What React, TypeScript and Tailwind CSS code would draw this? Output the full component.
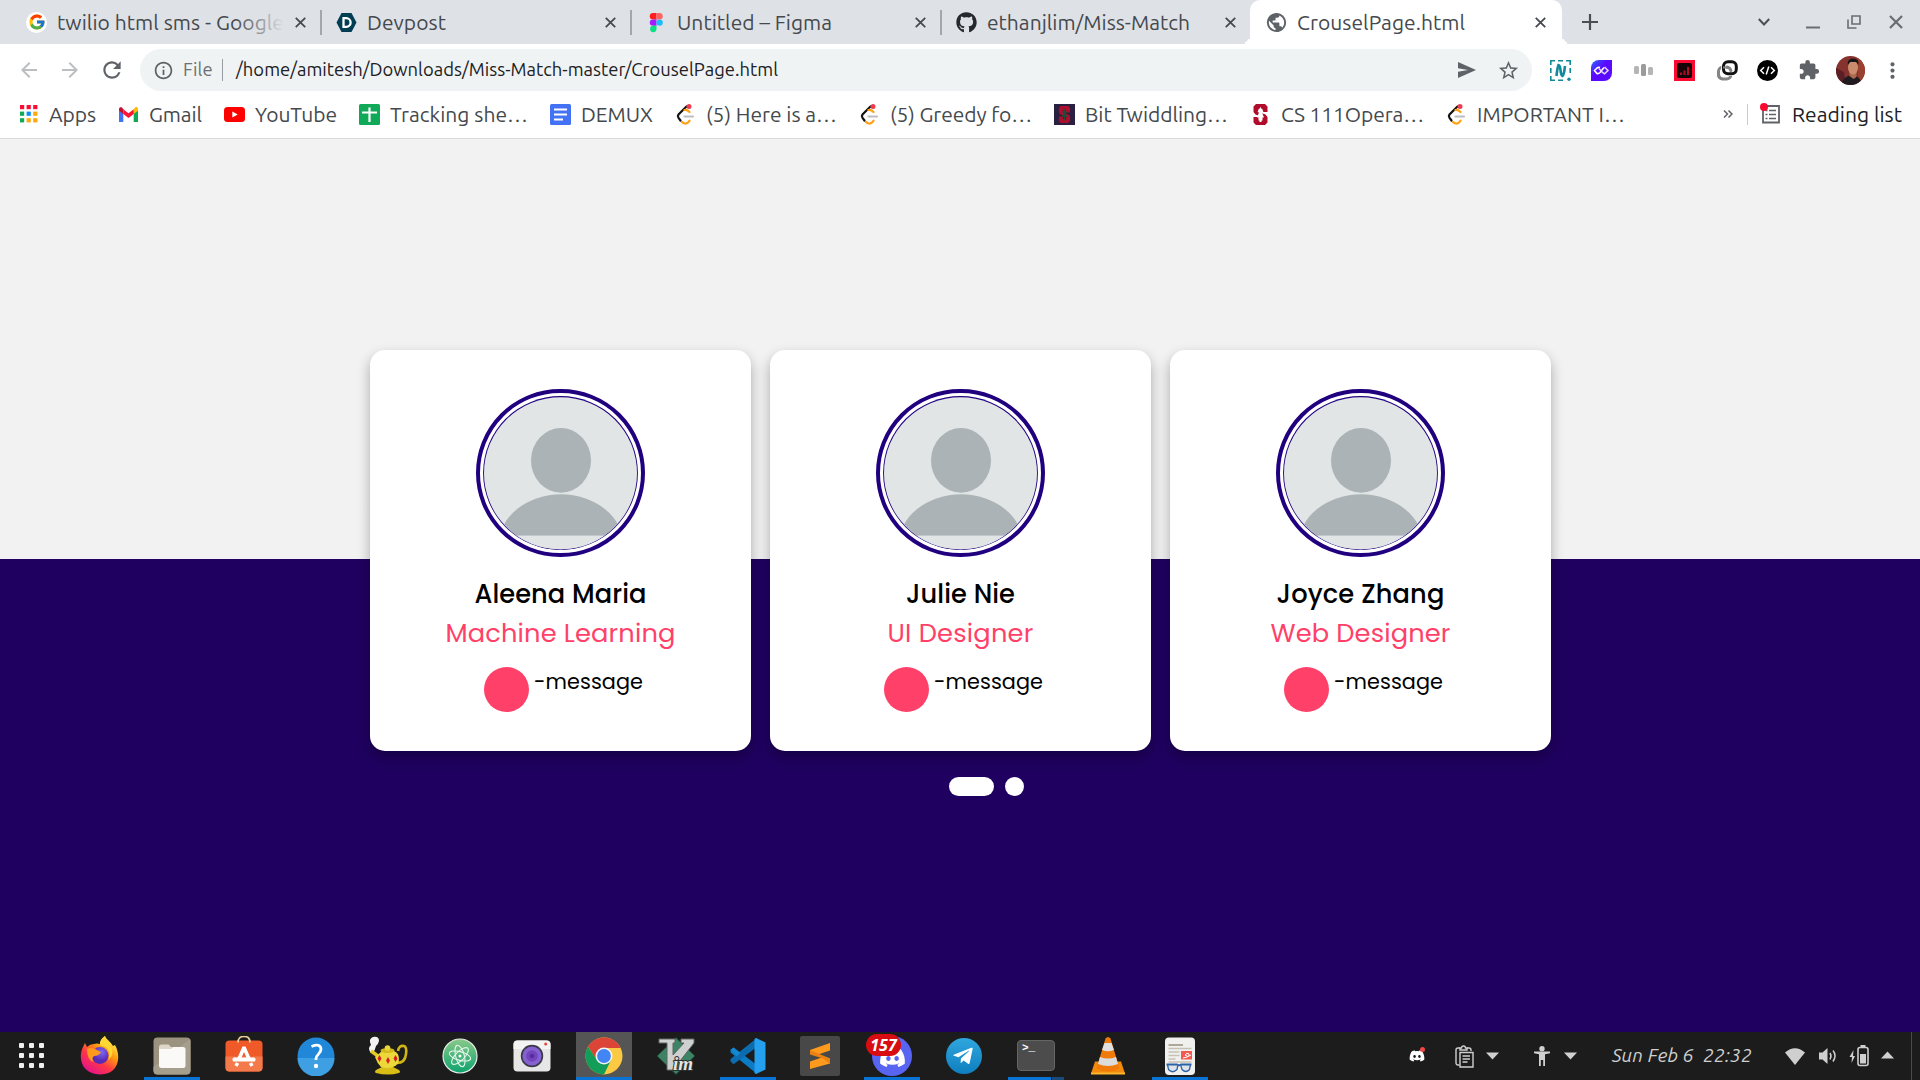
import { useLayoutEffect, useRef, useState } from 'react'
import type { ReactNode } from 'react'
import { FcGoogle } from 'react-icons/fc'
import { FaDiscord, FaGithub, FaTelegramPlane } from 'react-icons/fa'
import {
  MdArrowBack,
  MdArrowForward,
  MdExtension,
  MdInfoOutline,
  MdMoreVert,
  MdPublic,
  MdRefresh,
  MdStarBorder,
} from 'react-icons/md'

interface FitTextProps {
  text: string
  width: number
  className?: string
}

// Spreads the letters so that a label takes exactly the given width
function FitText({ text, width, className = '' }: FitTextProps) {
  const ref = useRef<HTMLSpanElement>(null)
  const [spacing, setSpacing] = useState(0)

  useLayoutEffect(() => {
    if (!ref.current) return
    const natural = ref.current.getBoundingClientRect().width
    setSpacing((width - natural) / text.length)
  }, [text, width])

  return (
    <span ref={ref} className={`inline-block shrink-0 whitespace-pre ${className}`} style={{ letterSpacing: spacing }}>
      {text}
    </span>
  )
}

/* ---------- small icons ---------- */

function CloseIcon({ size = 11 }: { size?: number }) {
  return (
    <svg width={size} height={size} viewBox="0 0 10 10" stroke="currentColor" strokeWidth="1.6">
      <path d="M.7.7l8.6 8.6M9.3.7L.7 9.3" />
    </svg>
  )
}

function GoogleIcon() {
  return (
    <span className="flex size-[21px] items-center justify-center rounded-full bg-white">
      <FcGoogle size={18} />
    </span>
  )
}

function DevpostIcon() {
  return (
    <svg width="21" height="21" viewBox="0 0 21 21">
      <path d="M5.5 1h10l5 9.5-5 9.5h-10l-5-9.5z" fill="#003e54" />
      <path d="M7.5 6.2h2.8a4.3 4.3 0 010 8.6H7.5z" fill="none" stroke="#fff" strokeWidth="2.3" />
    </svg>
  )
}

function FigmaIcon() {
  return (
    <svg width="21" height="21" viewBox="0 0 21 21">
      <path d="M10.5 1H7a3.2 3.2 0 000 6.4h3.5z" fill="#ff1f1f" />
      <path d="M10.5 1h3a3.2 3.2 0 010 6.4h-3z" fill="#ff6262" />
      <path d="M10.5 7.4H7a3.2 3.2 0 000 6.4h3.5z" fill="#a51aff" />
      <circle cx="13.6" cy="10.6" r="3.2" fill="#1abcfe" />
      <path d="M10.5 13.8H7a3.2 3.2 0 103.500 3.2z" fill="#0adf83" />
    </svg>
  )
}

function AppsIcon() {
  const colors = ['#fb0d33', '#fb0d33', '#fb0d33', '#0fa958', '#0b8cff', '#ffa90b', '#0fa958', '#ffa90b', '#ffa90b']
  return (
    <svg width="21" height="21" viewBox="0 0 21 21">
      {colors.map((c, i) => (
        <rect key={i} x={2 + (i % 3) * 6.6} y={1 + Math.floor(i / 3) * 6.6} width="4.2" height="4.2" fill={c} />
      ))}
    </svg>
  )
}

function GmailIcon() {
  return (
    <svg width="21" height="21" viewBox="0 0 21 21">
      <path d="M1 6v12h4.300V9z" fill="#4272f5" />
      <path d="M20 6v12h-4.300V9z" fill="#0fa958" />
      <path d="M15.700 5.500V10L20 6.800V5c0-2-2-2.400-3-1.500z" fill="#ffbc04" />
      <path d="M5.300 10V5.300l5.200 3.900 5.200-3.900V10l-5.200 4z" fill="#fb1638" />
      <path d="M1 6.800L5.300 10V5.300L4 3.500C3 2.700 1 3.200 1 5z" fill="#c5122f" />
    </svg>
  )
}

function YouTubeIcon() {
  return (
    <svg width="21" height="21" viewBox="0 0 21 21">
      <rect x="0" y="3" width="21" height="15" rx="3.5" fill="#f00" />
      <path d="M8.3 7.5v6l5.400-3z" fill="#fff" />
    </svg>
  )
}

function SheetsIcon() {
  return (
    <svg width="21" height="21" viewBox="0 0 21 21">
      <rect width="21" height="21" rx="1.5" fill="#0fa958" />
      <path d="M10.500 3.500v14.500M3 8.500h15" stroke="#fff" strokeWidth="2.2" />
    </svg>
  )
}

function DocsIcon() {
  return (
    <svg width="21" height="21" viewBox="0 0 21 21">
      <rect width="21" height="21" rx="1.5" fill="#4372f5" />
      <path d="M4 5.500h13M4 10.500h13M4 15.500h9" stroke="#fff" strokeWidth="2" />
    </svg>
  )
}

function LeetCodeIcon() {
  return (
    <svg width="21" height="21" viewBox="0 0 21 21" fill="none" strokeWidth="2.2" strokeLinecap="round">
      <path d="M11.500 2.500L3.500 10.500q-1.300 1.700 0 3.300L5.500 16.500" stroke="#111" />
      <path d="M7 18l1.500 1q2.500 1.500 4.500-.5l1.500-1.800M9.500 6q2.500-.5 5 2" stroke="#ffa116" />
      <path d="M9.500 12.500h8.500" stroke="#bdbdbd" />
      <circle cx="14" cy="2.600" r="2.500" fill="#ef3c50" />
    </svg>
  )
}

function StanfordMark() {
  return (
    <>
      <path d="M6 0h9l2.500 2.500V8h-5V5h-4v3l7 2.500 2 2.500v5.500L15 21H6l-2.500-2.500V13h5v3.500h4V13l-7-2.500-2-2.500V2.500z" fill="#b00c2b" />
      <path d="M10.500 3l3 5-1.500.5 2 5h-2.500V18h-2v-4.500H7l2-5-1.500-.5z" fill="currentColor" />
    </>
  )
}

function BitIcon() {
  return (
    <svg width="21" height="21" viewBox="0 0 21 21">
      <rect width="21" height="21" fill="#292042" />
      <g transform="translate(2.100 2.100) scale(.8)" className="text-[#254a38]">
        <StanfordMark />
      </g>
    </svg>
  )
}

function StanfordIcon() {
  return (
    <svg width="21" height="21" viewBox="0 0 21 21" className="text-white">
      <StanfordMark />
    </svg>
  )
}

/* ---------- browser ---------- */

interface TabItem {
  title: string
  width: number
  icon: ReactNode
  faded?: boolean
}

const tabs: TabItem[] = [
  { title: 'twilio html sms - Google', width: 227, icon: <GoogleIcon />, faded: true },
  { title: 'Devpost', width: 79, icon: <DevpostIcon /> },
  { title: 'Untitled – Figma', width: 155, icon: <FigmaIcon /> },
  { title: 'ethanjlim/Miss-Match', width: 203, icon: <FaGithub size={21} color="#24292f" /> },
]

function TabStrip() {
  return (
    <div className="flex h-[44px] bg-[#dee1e6] pl-[11px] text-[21px] text-[#45494d]">
      {tabs.map((tab, i) => (
        <div key={tab.title} className="relative flex w-[310px] items-center pl-[15px] pr-[15px]">
          <span className="flex size-[21px] items-center justify-center">{tab.icon}</span>
          <div className="relative ml-[10px] w-[227px] overflow-hidden pt-px">
            <FitText text={tab.title} width={tab.width} />
            {tab.faded && (
              <span className="absolute inset-y-0 right-0 w-[50px] bg-linear-to-r from-[#dee1e6]/0 to-[#dee1e6]" />
            )}
          </div>
          <span className="ml-auto">
            <CloseIcon />
          </span>
          {i < tabs.length - 1 && <span className="absolute -right-px top-[10px] h-[25px] w-[2px] bg-[#a3a6aa]" />}
        </div>
      ))}
      <div className="relative -ml-px flex w-[312px] items-center rounded-t-[10px] bg-white pl-[15px] pr-[16px]">
        <span className="absolute -left-[10px] bottom-0 size-[10px] rounded-br-[10px] shadow-[5px_5px_0_0_white]" />
        <span className="absolute -right-[10px] bottom-0 size-[10px] rounded-bl-[10px] shadow-[-5px_5px_0_0_white]" />
        <MdPublic size={23} color="#5f6368" />
        <FitText text="CrouselPage.html" width={168} className="ml-[9px] pt-px" />
        <span className="ml-auto">
          <CloseIcon />
        </span>
      </div>
      <div className="flex flex-1 items-center pl-[20px] pr-[17px] text-[#4b4f53]">
        <svg width="16" height="16" viewBox="0 0 16 16" stroke="currentColor" strokeWidth="2.2">
          <path d="M8 0v16M0 8h16" />
        </svg>
        <svg className="ml-[160px]" width="12" height="8" viewBox="0 0 12 8" fill="none" stroke="currentColor" strokeWidth="2">
          <path d="M.8 1L6 6.500 11.200 1" />
        </svg>
        <svg className="ml-[36px]" width="14" height="14" viewBox="0 0 14 14" stroke="#6a6d71" strokeWidth="2">
          <path d="M0 12.500h14" />
        </svg>
        <svg className="ml-[27px]" width="14" height="14" viewBox="0 0 14 14" fill="none" stroke="#6a6d71" strokeWidth="1.6">
          <path d="M5 1h8v8H5zM1 4.500V13h8.500" />
        </svg>
        <span className="ml-auto text-[#6a6d71]">
          <CloseIcon size={14} />
        </span>
      </div>
    </div>
  )
}

function Toolbar() {
  return (
    <div className="flex h-[52px] items-center bg-white pl-[17px]">
      <MdArrowBack size={24} color="#bcbec0" />
      <MdArrowForward size={24} color="#bcbec0" className="ml-[17px]" />
      <MdRefresh size={26} color="#5f6368" className="ml-[17px]" />
      <div className="ml-[15px] flex h-[42px] w-[1392px] items-center rounded-full bg-[#f0f3f4] pl-[13px] pr-[12px] text-[18.4px]">
        <MdInfoOutline size={21} color="#5f6368" />
        <FitText text="File" width={30} className="ml-[9px] text-[#6c7075]" />
        <span className="ml-[9px] h-[22px] w-px bg-[#9a9da1]" />
        <FitText
          text="/home/amitesh/Downloads/Miss-Match-master/CrouselPage.html"
          width={542}
          className="ml-[13px] text-[#202124]"
        />
        <svg className="ml-auto" width="18" height="16" viewBox="0 0 18 16" fill="#5f6368">
          <path d="M0 0l18 8L0 16V9.800L10 8 0 6.200z" />
        </svg>
        <MdStarBorder size={23} color="#5f6368" className="ml-[21px]" />
      </div>
      <svg className="ml-[18px]" width="21" height="21" viewBox="0 0 21 21" fill="none" stroke="#118a9b">
        <path d="M.8 5V.8H5M8 .8h5M16 .8h4.200V5M20.200 8v5M.8 8v5M.8 16v4.200H5M8 20.200h5" strokeWidth="1.6" />
        <path d="M6.500 16C7 11 7.500 7.500 8.500 5q1.500 0 2 5 .5 5 2 6 1.500-1 2.500-10" strokeWidth="2.6" />
        <circle cx="19" cy="19.300" r="1.7" fill="#118a9b" stroke="none" />
      </svg>
      <svg className="ml-[20px]" width="21" height="21" viewBox="0 0 21 21" fill="none">
        <defs>
          <linearGradient id="ext" x1="0" y1="0" x2="0.7" y2="0.7">
            <stop offset="0" stopColor="#2a6bff" />
            <stop offset="0.6" stopColor="#5a0bff" />
          </linearGradient>
        </defs>
        <path d="M8 0h13v13a8 8 0 01-8 8H0V8a8 8 0 018-8z" fill="url(#ext)" />
        <path d="M9 7.500q-1.500-.5-3 .5L3.500 10.500l2.500 3q1.500.5 3-1l4-5" stroke="#fff" strokeWidth="1.6" />
        <path d="M8 8.500l3.500 4 2 1.300 3.500-3.300L13.500 7" stroke="#e2d5ff" strokeWidth="1.5" />
      </svg>
      <svg className="ml-[22px]" width="19" height="12" viewBox="0 0 19 12">
        <rect y="2" width="5" height="8" rx="1.5" fill="#b5b5b5" />
        <rect x="7" width="5" height="12" rx="1.5" fill="#9b9b9b" />
        <rect x="14" y="3" width="5" height="8" rx="1.5" fill="#b5b5b5" />
      </svg>
      <svg className="ml-[21px]" width="21" height="21" viewBox="0 0 21 21">
        <rect width="21" height="21" fill="#f90b32" />
        <rect x="3" y="3" width="15" height="15" rx="2" fill="#150508" />
        <path d="M7 12.500V15M10.500 10.500V15M14 7v8" stroke="#b00d27" strokeWidth="2" />
      </svg>
      <svg className="ml-[22px]" width="21" height="21" viewBox="0 0 21 21" fill="none" strokeWidth="3">
        <rect x="1.500" y="7" width="12.500" height="12" rx="4.500" stroke="#858585" />
        <rect x="6.500" y="1.800" width="12.800" height="12" rx="4.500" stroke="#fff" strokeWidth="4.500" />
        <path d="M1.500 11.500v3a4.500 4.500 0 004 4.500" stroke="#858585" />
        <rect x="6.500" y="1.800" width="12.800" height="12" rx="4.500" stroke="#111" />
        <path d="M6 7.500H9q4.500 0 5 4.500" stroke="#858585" strokeWidth="2" />
      </svg>
      <svg className="ml-[19px]" width="21" height="21" viewBox="0 0 21 21" fill="none">
        <circle cx="10.500" cy="10.500" r="10.500" fill="#000" />
        <path d="M7 7.200l-3.300 3.300L7 13.800M14 7.200l3.300 3.300-3.300 3.300M11.800 6.500l-2.600 8" stroke="#fff" strokeWidth="1.5" />
      </svg>
      <MdExtension size={22} color="#5f6368" className="ml-[20px]" />
      <svg className="ml-[16px]" width="29" height="29" viewBox="0 0 29 29">
        <defs>
          <clipPath id="avatar">
            <circle cx="14.500" cy="14.500" r="14.500" />
          </clipPath>
        </defs>
        <g clipPath="url(#avatar)">
          <rect width="29" height="29" fill="#86322f" />
          <path d="M0 12l8 4 2 13H0z" fill="#5b2025" />
          <path d="M22 0h7v29h-7z" fill="#9b3f30" />
          <path d="M5 29q2-9 11-10 9 1 10 10z" fill="#201b1f" />
          <path d="M13.500 15h7v6l-3 2-4-3z" fill="#a96c51" />
          <ellipse cx="17" cy="11.500" rx="5" ry="7" fill="#c98c6c" />
          <path d="M11.800 9q-1-6 5-6.500 7 0 5.500 6.500l-2-3h-6z" fill="#1a1517" />
        </g>
      </svg>
      <MdMoreVert size={25} color="#5f6368" className="ml-[15px]" />
    </div>
  )
}

interface Bookmark {
  label: string
  width: number
  icon: ReactNode
}

const bookmarks: Bookmark[] = [
  { label: 'Apps', width: 47, icon: <AppsIcon /> },
  { label: 'Gmail', width: 53, icon: <GmailIcon /> },
  { label: 'YouTube', width: 82, icon: <YouTubeIcon /> },
  { label: 'Tracking she…', width: 138, icon: <SheetsIcon /> },
  { label: 'DEMUX', width: 72, icon: <DocsIcon /> },
  { label: '(5) Here is a…', width: 131, icon: <LeetCodeIcon /> },
  { label: '(5) Greedy fo…', width: 142, icon: <LeetCodeIcon /> },
  { label: 'Bit Twiddling…', width: 143, icon: <BitIcon /> },
  { label: 'CS 111Opera…', width: 143, icon: <StanfordIcon /> },
  { label: 'IMPORTANT I…', width: 148, icon: <LeetCodeIcon /> },
]

function BookmarksBar() {
  return (
    <div className="flex h-[43px] items-center gap-[22px] border-b border-[#d8dadc] bg-white pb-[6px] pl-[18px] pr-[18px] text-[21px] text-[#45494d]">
      {bookmarks.map((b) => (
        <div key={b.label} className="flex items-center gap-[10px]">
          {b.icon}
          <FitText text={b.label} width={b.width} className="pt-[2px]" />
        </div>
      ))}
      <div className="ml-auto flex items-center">
        <svg width="10" height="8" viewBox="0 0 10 8" fill="none" stroke="#5f6368" strokeWidth="1.5">
          <path d="M1 .5L4.500 4 1 7.500M5.500.5L9 4 5.500 7.500" />
        </svg>
        <span className="ml-[14px] h-[21px] w-px bg-[#c9ccd0]" />
        <svg className="ml-[12px]" width="20" height="22" viewBox="0 0 20 22" fill="none">
          <path d="M3 3h16v16.500H3z" stroke="#5f6368" strokeWidth="1.8" />
          <path d="M5.500 7.500h2M5.500 11.500h2M5.500 15.500h2M9 7.500h7M9 11.500h7M9 15.500h7" stroke="#5f6368" strokeWidth="1.6" />
          <circle cx="4" cy="4" r="4" fill="#f9092e" />
        </svg>
        <FitText text="Reading list" width={110} className="ml-[12px] pt-[2px] text-[#202124]" />
      </div>
    </div>
  )
}

/* ---------- page ---------- */

interface Profile {
  name: string
  nameWidth: number
  role: string
  roleWidth: number
}

const profiles: Profile[] = [
  { name: 'Aleena Maria', nameWidth: 172, role: 'Machine Learning', roleWidth: 230 },
  { name: 'Julie Nie', nameWidth: 109, role: 'UI Designer', roleWidth: 146 },
  { name: 'Joyce Zhang', nameWidth: 168, role: 'Web Designer', roleWidth: 180 },
]

function ProfileCard({ profile }: { profile: Profile }) {
  return (
    <div className="flex h-[401px] w-[381px] flex-col items-center rounded-[15px] bg-white pt-[39px] font-[Poppins,Inter,sans-serif] text-black shadow-[0_6px_13px_rgba(0,0,0,0.3)]">
      <div className="h-[168px] w-[169px] rounded-full border-4 border-[#210080] p-[3px]">
        <svg width="155" height="154" viewBox="0 0 155 155" preserveAspectRatio="none">
          <defs>
            <clipPath id="photo">
              <circle cx="77.500" cy="77.700" r="76.500" />
            </clipPath>
          </defs>
          <circle cx="77.500" cy="77.500" r="77.400" fill="#210080" />
          <g clipPath="url(#photo)">
            <rect width="155" height="155" fill="#e1e5e6" />
            <ellipse cx="78" cy="64.800" rx="30" ry="32.500" fill="#abb3b6" />
            <ellipse cx="78" cy="149" rx="62" ry="50" fill="#abb3b6" />
            <rect y="140.500" width="155" height="16" fill="#e1e5e6" />
          </g>
        </svg>
      </div>
      <div className="mt-[18px] flex h-[39px] items-center pl-px text-[25.7px] font-medium">
        <FitText text={profile.name} width={profile.nameWidth} />
      </div>
      <div className="flex h-[39px] items-center pl-px text-[25.7px] text-[#ff4169]">
        <FitText text={profile.role} width={profile.roleWidth} />
      </div>
      <div className="mt-[14px] flex pl-[7px]">
        <span className="size-[45px] rounded-full bg-[#ff416a]" />
        <FitText text="-message" width={109} className="ml-[5px] text-[20.8px] leading-[30px]" />
      </div>
    </div>
  )
}

function CarouselPage() {
  return (
    <main className="flex h-[893px] flex-col items-center bg-linear-to-b from-[#f2f2f2] from-[420px] to-[#1f0060] to-[420px] pt-[211px]">
      <div className="flex gap-[19px]">
        {profiles.map((p) => (
          <ProfileCard key={p.name} profile={p} />
        ))}
      </div>
      <div className="mt-[26px] flex gap-[11px] pl-[53px]">
        <span className="h-[19px] w-[45px] rounded-[9.5px] bg-white" />
        <span className="size-[19px] rounded-[9.5px] bg-white" />
      </div>
    </main>
  )
}

/* ---------- dock ---------- */

function FirefoxIcon() {
  return (
    <svg width="40" height="40" viewBox="0 0 40 40">
      <defs>
        <linearGradient id="ff1" x1="0.85" y1="0.1" x2="0.25" y2="0.95">
          <stop offset="0" stopColor="#fff44f" />
          <stop offset="0.35" stopColor="#ff980e" />
          <stop offset="0.65" stopColor="#ff3647" />
          <stop offset="1" stopColor="#e31587" />
        </linearGradient>
        <radialGradient id="ff2" cx="0.6" cy="0.3">
          <stop offset="0" stopColor="#7d6af5" />
          <stop offset="1" stopColor="#5b2bb5" />
        </radialGradient>
      </defs>
      <path d="M25 0c1 3 5 5 8 10l2-1c6 10 5 29.500-15 29.500C2 38.500-2 23 2.500 12L5 7l2 4q3-3 7-3 3-1 6 0 0-5 5-8z" fill="url(#ff1)" />
      <circle cx="20" cy="19.500" r="8.500" fill="url(#ff2)" />
      <path d="M7 13q4-2 8 0l6 3q-2 4-7 4-3 2 0 6-7-1-7-13z" fill="#ff9a1d" />
      <path d="M25 0c-5 4-6 7-4 10 8 0 10 8 7 14 6-4 5-11 2-14 0-3-5-5-5-10z" fill="#ffd735" />
    </svg>
  )
}

function FilesIcon() {
  return (
    <svg width="40" height="40" viewBox="0 0 40 40">
      <rect x="1.500" y="1.500" width="37" height="37" rx="4" fill="#9b927f" />
      <path d="M1.500 31L38 3a4 4 0 01.5 2v29.500a4 4 0 01-4 4h-29a4 4 0 01-4-4z" fill="#a69e8d" />
      <path d="M7 17v-6a2.500 2.500 0 012.500-2.500h7L19 11h11v6z" fill="#ddd6c9" />
      <path d="M7 13h12l2.500-2H31a2.500 2.500 0 012.500 2.500v16A2.500 2.500 0 0131 32H9.500A2.500 2.500 0 017 29.500z" fill="#faf9f7" />
    </svg>
  )
}

function SoftwareIcon() {
  return (
    <svg width="40" height="40" viewBox="0 0 40 40" fill="none">
      <rect x="1.500" y="4.500" width="37" height="31" rx="4" fill="#f05a28" />
      <path d="M1.500 20.500h37v11a4 4 0 01-4 4h-29a4 4 0 01-4-4z" fill="#f47a4b" />
      <path d="M14 6.500Q14 .5 20 .5t6 6" stroke="#ecd0a0" strokeWidth="1.7" />
      <path d="M12.500 24L18.500 10.500h3L27.500 24h-4L20 16l-3.500 8z" fill="#fff" />
      <rect x="8.500" y="21.500" width="23" height="4" rx="1.5" fill="#fff" />
      <path d="M13.500 27l-1.500 3M26.500 27l1.500 3" stroke="#fff" strokeWidth="3.5" />
    </svg>
  )
}

function HelpIcon() {
  return (
    <svg width="40" height="40" viewBox="0 0 40 40" fill="none">
      <circle cx="20" cy="20" r="18.500" fill="#2187d8" />
      <path d="M1.500 22a18.500 18.500 0 0037 0z" fill="#3e9fe3" />
      <path d="M15.500 10.500q9-3.500 9.500 2.500c.3 4.500-5 5.500-5 9.500v1.500" stroke="#fff" strokeWidth="2.8" />
      <circle cx="20" cy="30" r="2.200" fill="#fff" />
    </svg>
  )
}

function TeapotIcon() {
  return (
    <svg width="42" height="40" viewBox="0 0 42 40" fill="none">
      <path d="M4 17q-4-5 0-8-3-6 2-8 6-1 6 4-1 4-3 5-1 4-3 7z" fill="#f4f4f4" />
      <path d="M31 15q1-6 6-5 3 1 2 8-1 9-9 9" stroke="#cfb515" strokeWidth="2.6" />
      <path d="M4 15q6 4 9 7" stroke="#e2cb22" strokeWidth="3.5" />
      <path d="M9 34q-2 2 0 3 12 3 23 0 2-1 0-3l-6-3H15z" fill="#d9bd17" />
      <path d="M8 21q4-3 7-6 6-2 12 0 5 2 5 8 0 6-6 8-6 2-12 0-4-4-6-10z" fill="#ecd83a" />
      <ellipse cx="20.500" cy="14.500" rx="7" ry="2.500" fill="#d5b91a" />
      <circle cx="20.500" cy="12" r="2.800" fill="#ead63c" />
      <path d="M12.500 19l2 3.500-2 3.500-2-3.500zM21 21l2 3.500-2 3.500-2-3.500zM28.500 19l2 3.500-2 3.500-2-3.500z" fill="#d32020" />
    </svg>
  )
}

function AtomIcon() {
  return (
    <svg width="40" height="40" viewBox="0 0 40 40" fill="none">
      <defs>
        <linearGradient id="atom" x1="0" y1="0" x2="0" y2="1">
          <stop offset="0" stopColor="#8ac989" />
          <stop offset="1" stopColor="#0da36d" />
        </linearGradient>
      </defs>
      <circle cx="20" cy="20" r="17" fill="url(#atom)" stroke="#e5ece8" strokeWidth="1.2" />
      <g stroke="#e6f5ed" strokeWidth="1.1">
        <ellipse cx="20" cy="20" rx="11" ry="4.300" transform="rotate(15 20 20)" />
        <ellipse cx="20" cy="20" rx="11" ry="4.300" transform="rotate(75 20 20)" />
        <ellipse cx="20" cy="20" rx="11" ry="4.300" transform="rotate(135 20 20)" />
      </g>
      <circle cx="20" cy="20" r="1.500" fill="#fff" />
    </svg>
  )
}

function CameraIcon() {
  return (
    <svg width="40" height="40" viewBox="0 0 40 40">
      <rect x="1.500" y="4.500" width="37" height="31" rx="4" fill="#e7e6e6" />
      <path d="M1.500 13h37V8.500a4 4 0 00-4-4h-29a4 4 0 00-4 4z" fill="#f4f3f3" />
      <circle cx="20" cy="20" r="11.200" fill="#39394a" />
      <circle cx="20" cy="20" r="9.600" fill="#8562d0" />
      <circle cx="20" cy="20" r="5.800" fill="#7345bd" />
      <circle cx="20" cy="20" r="2.200" fill="#542c9c" />
      <circle cx="33.700" cy="8" r="1.500" fill="#e0453a" />
    </svg>
  )
}

function ChromeIcon() {
  return (
    <svg width="40" height="40" viewBox="0 0 40 40">
      <circle cx="20" cy="20" r="18.500" fill="#fcca42" />
      <path d="M3.980 10.750A18.500 18.500 0 0136 10.750L36.300 12H20l-7 12.300z" fill="#dc4437" />
      <path d="M3.980 10.750A18.500 18.500 0 0020 38.500L27 24l-14 0z" fill="#129d58" />
      <circle cx="20" cy="20" r="8.500" fill="#f4f4f4" />
      <circle cx="20" cy="20" r="6.900" fill="#4285f4" />
    </svg>
  )
}

function VimIcon() {
  return (
    <svg width="40" height="40" viewBox="0 0 40 40">
      <path d="M20 1.500l19 18.500-19 18.500L1 20z" fill="#3c8466" stroke="#21392f" />
      <path d="M3 3h16v4h-2v12L28 7h-3V3h13v4L17 34h-6V7H3z" fill="#cfd1d1" stroke="#5e6462" />
      <text x="17" y="34" fill="#e4e5e5" stroke="#2b2f2d" strokeWidth="2" paintOrder="stroke" className="font-['Liberation_Serif',serif] text-[19px] font-bold italic">
        im
      </text>
    </svg>
  )
}

function VsCodeIcon() {
  return (
    <svg width="40" height="40" viewBox="0 0 40 40">
      <path d="M2.500 14l3-2.500L29 29v9L2.500 16.500z" fill="#0a7bc4" />
      <path d="M2.500 25.500l3 2.800L29 11V2L2.500 23z" fill="#0b6cb0" />
      <path d="M2.500 14l3-2.500 7 5.500-4 3.500z" fill="#1487d0" />
      <path d="M28 2l9.500 4.500v27L28 38l-1.500-1V3z" fill="#25a0ee" />
    </svg>
  )
}

function SublimeIcon() {
  return (
    <svg width="40" height="40" viewBox="0 0 40 40">
      <rect width="40" height="40" rx="2" fill="#484848" />
      <path d="M10 14l20-7v7.500l-12 4 12 4v5L10 33v-7.500l12.500-4.200L10 17.500z" fill="#ff9a1c" />
      <path d="M10 14v4.500l13 4 7 5.500v-5.500z" fill="#e98212" />
    </svg>
  )
}

function DiscordIcon() {
  return (
    <span className="relative flex size-[40px] items-center justify-center rounded-full bg-[#5865f2]">
      <FaDiscord size={27} color="#fff" className="mt-[3px]" />
      <span className="absolute -left-[6px] -top-[2px] flex h-[22px] w-[35px] items-center justify-center rounded-full bg-[#d80d12] font-['Noto_Sans',sans-serif] text-[16px] font-bold italic text-white">
        157
      </span>
    </span>
  )
}

function TelegramIcon() {
  return (
    <span className="flex size-[36px] items-center justify-center rounded-full bg-linear-to-b from-[#2fa6de] to-[#0d7fbf]">
      <FaTelegramPlane size={22} color="#fff" className="-ml-[3px]" />
    </span>
  )
}

function TerminalIcon() {
  return (
    <span className="h-[31px] w-[38px] rounded-[4px] border border-[#656565] bg-[#4c4c4c] pl-[4px] font-['Liberation_Mono',monospace] text-[11px] font-bold leading-[15px] text-white">
      {'>_'}
    </span>
  )
}

function VlcIcon() {
  return (
    <svg width="40" height="40" viewBox="0 0 40 40">
      <path d="M7 25.500h26l4 12H3z" fill="#f28a0b" />
      <path d="M3 36.500h34v2H3z" fill="#ffb52c" />
      <path d="M17.500 2.500q2.500-3 5 0l9 30q-11.500 6-23 0z" fill="#f07b0b" />
      <path d="M16.500 7h7l2.500 7q-6 2.500-12 0z" fill="#e0e0e0" />
      <path d="M12 21q8 3 16 0l2 7q-10 4-20 0z" fill="#dcdcdc" />
    </svg>
  )
}

function DocumentIcon() {
  return (
    <svg width="40" height="40" viewBox="0 0 40 40" fill="none">
      <rect x="5" y="1.500" width="30" height="37.500" rx="4" fill="#f0f0ef" />
      <path d="M8.500 9H23" stroke="#9e9683" strokeWidth="1.6" />
      <path d="M8.500 12.500h23M8.500 16h11M8.500 19.500h11M8.500 23h7M8.500 26h23" stroke="#c6c1b5" strokeWidth="1.3" />
      <rect x="21" y="15" width="11" height="8.500" fill="#f4594f" />
      <path d="M23 22q7-1 6-4-2-2-4 1 3 3 6 0" stroke="#fff" />
      <path d="M7.500 28.500l1 5q4 4.500 8.500 0l1-5M20.500 28.500l1.500 5q4 4 7.500 0l1-5" stroke="#2b62a8" strokeWidth="1.3" fill="#dde3e8" />
      <path d="M6.500 28.500h10.500q2 1.500 4 0h10.500" stroke="#2b62a8" strokeWidth="1.8" />
    </svg>
  )
}

interface DockItem {
  id: string
  icon: ReactNode
  running?: boolean
  focused?: boolean
  windows?: number
}

const dockItems: DockItem[] = [
  { id: 'firefox', icon: <FirefoxIcon /> },
  { id: 'files', icon: <FilesIcon />, running: true },
  { id: 'software', icon: <SoftwareIcon /> },
  { id: 'help', icon: <HelpIcon /> },
  { id: 'teapot', icon: <TeapotIcon /> },
  { id: 'atom', icon: <AtomIcon /> },
  { id: 'camera', icon: <CameraIcon /> },
  { id: 'chrome', icon: <ChromeIcon />, running: true, focused: true },
  { id: 'vim', icon: <VimIcon /> },
  { id: 'vscode', icon: <VsCodeIcon />, running: true },
  { id: 'sublime', icon: <SublimeIcon /> },
  { id: 'discord', icon: <DiscordIcon />, running: true },
  { id: 'telegram', icon: <TelegramIcon /> },
  { id: 'terminal', icon: <TerminalIcon />, running: true, windows: 2 },
  { id: 'vlc', icon: <VlcIcon /> },
  { id: 'document', icon: <DocumentIcon />, running: true },
]

function Caret({ up = false }: { up?: boolean }) {
  return (
    <svg width="13" height="8" viewBox="0 0 13 8" fill="#d0d0d0">
      <path d={up ? 'M0 7.500L6.500.5l6.500 7z' : 'M0 .5h13l-6.500 7z'} />
    </svg>
  )
}

function Tray() {
  return (
    <div className="ml-auto flex items-center text-[#cfcfcf]">
      <span className="relative">
        <FaDiscord size={16} color="#fff" />
        <span className="absolute -top-px right-0 size-[5px] rounded-full bg-[#f04747]" />
      </span>
      <svg className="ml-[30px]" width="19" height="23" viewBox="0 0 19 23" fill="none" stroke="currentColor" strokeWidth="1.4">
        <path d="M4.500 20H3a2 2 0 01-2-2V5a2 2 0 012-2h2M12 3h2a2 2 0 012 2v1" />
        <path d="M5 5V3h1.500a2 2 0 014 0H12v2z" />
        <path d="M5 7.500h13V22H5z" />
        <path d="M7.500 11H15M7.500 14H15M7.500 17h5" />
      </svg>
      <span className="ml-[12px]">
        <Caret />
      </span>
      <svg className="ml-[35px]" width="16" height="20" viewBox="0 0 16 20" fill="currentColor">
        <circle cx="8" cy="2.700" r="2.700" />
        <path d="M0 5.500h16v1.800l-5 1V20H9.200v-6H6.800v6H5V8.300l-5-1z" />
      </svg>
      <span className="ml-[14px]">
        <Caret />
      </span>
      <FitText text="Sun Feb 6  22:32" width={140} className="-mt-px ml-[35px] text-[19px] italic" />
      <svg className="ml-[33px]" width="20" height="17" viewBox="0 0 20 17" fill="currentColor">
        <path d="M0 4.500Q10-4 20 4.500L10 17z" />
      </svg>
      <svg className="ml-[13px]" width="20" height="18" viewBox="0 0 20 18" fill="none" stroke="currentColor" strokeWidth="1.5">
        <path d="M1 5.500h3.500L9.500 1v16l-5-4.500H1z" fill="currentColor" stroke="none" />
        <path d="M12 6q2 3 0 6.500M15 3.500q4 5 0 11" />
      </svg>
      <svg className="ml-[11px]" width="20" height="22" viewBox="0 0 20 22" fill="none" stroke="currentColor">
        <path d="M4.500 5L.5 12H3l-.5 6L6 11H4z" fill="currentColor" stroke="none" />
        <rect x="9" y="2.500" width="10" height="18" rx="2" strokeWidth="1.6" />
        <path d="M11.500 1h5" strokeWidth="2" />
        <rect x="11" y="9" width="6" height="9.500" fill="currentColor" stroke="none" />
      </svg>
      <span className="ml-[12px] -mt-[3px]">
        <Caret up />
      </span>
      <span className="ml-[17px] mr-[8px] h-[48px] w-px bg-[#4a4a4a]" />
    </div>
  )
}

function Dock() {
  return (
    <footer className="flex h-[48px] bg-[#1c1c1c]">
      <div className="flex w-[64px] items-center justify-center pb-px pr-px">
        <div className="grid grid-cols-3 gap-[5px]">
          {Array.from({ length: 9 }).map((_, i) => (
            <span key={i} className="size-[5px] rounded-[1px] bg-[#f0f0f0]" />
          ))}
        </div>
      </div>
      <div className="flex gap-4 pl-[8px]">
        {dockItems.map((item) => (
          <div
            key={item.id}
            className={`relative flex w-[56px] items-center justify-center ${item.focused ? 'bg-[#555555]' : ''}`}
          >
            <span className="-mt-px flex">{item.icon}</span>
            {item.running && (
              <span className="absolute inset-x-0 bottom-0 flex h-[3px] gap-px">
                <span className="flex-1 bg-[#0a73d6]" />
                {item.windows === 2 && <span className="w-[12px] bg-[#194a7c]" />}
              </span>
            )}
          </div>
        ))}
      </div>
      <Tray />
    </footer>
  )
}

export default function App() {
  return (
    <div className="h-[1080px] w-[1920px] overflow-hidden font-[Ubuntu,'Noto_Sans',sans-serif]">
      <TabStrip />
      <Toolbar />
      <BookmarksBar />
      <CarouselPage />
      <Dock />
    </div>
  )
}
